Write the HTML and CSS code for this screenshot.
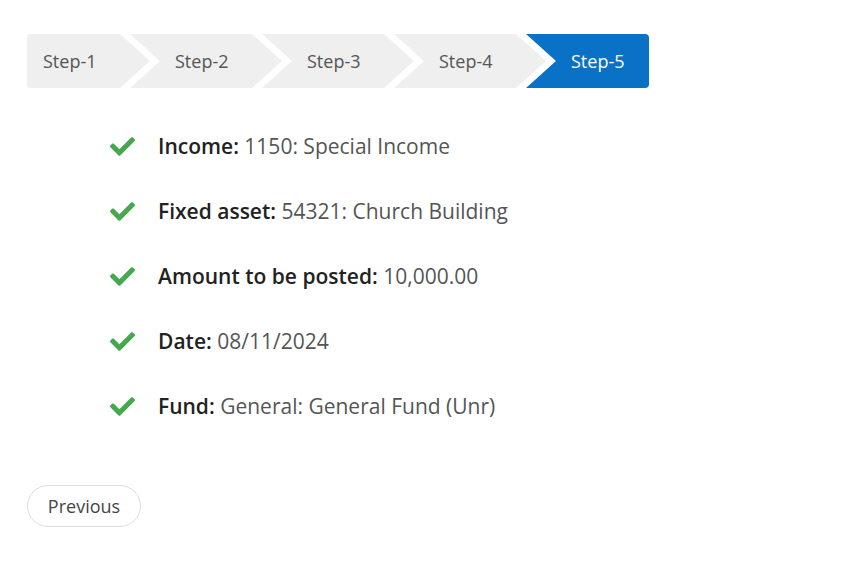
FILE: index.html
```html
<!DOCTYPE html>
<html>
<head>
<meta charset="utf-8">
<link rel="stylesheet" href="styles.css">
</head>
<body>
<div class="page">
  <div class="steps">
    <div class="step step-first">Step-1</div>
    <div class="step">Step-2</div>
    <div class="step">Step-3</div>
    <div class="step">Step-4</div>
    <div class="step step-last step-active">Step-5</div>
  </div>

  <ul class="summary">
    <li class="row">
      <svg class="check" viewBox="0 64 512 384"><path d="M173.898 439.404l-166.4-166.4c-9.997-9.997-9.997-26.206 0-36.204l36.203-36.204c9.997-9.998 26.207-9.998 36.204 0L192 312.69 432.095 72.596c9.997-9.997 26.207-9.997 36.204 0l36.203 36.204c9.997 9.997 9.997 26.206 0 36.204l-294.4 294.401c-9.998 9.997-26.207 9.997-36.204-.001z"/></svg>
      <span class="text"><span class="label">Income:</span> <span class="value">1150: Special Income</span></span>
    </li>
    <li class="row">
      <svg class="check" viewBox="0 64 512 384"><path d="M173.898 439.404l-166.4-166.4c-9.997-9.997-9.997-26.206 0-36.204l36.203-36.204c9.997-9.998 26.207-9.998 36.204 0L192 312.69 432.095 72.596c9.997-9.997 26.207-9.997 36.204 0l36.203 36.204c9.997 9.997 9.997 26.206 0 36.204l-294.4 294.401c-9.998 9.997-26.207 9.997-36.204-.001z"/></svg>
      <span class="text"><span class="label">Fixed asset:</span> <span class="value">54321: Church Building</span></span>
    </li>
    <li class="row">
      <svg class="check" viewBox="0 64 512 384"><path d="M173.898 439.404l-166.4-166.4c-9.997-9.997-9.997-26.206 0-36.204l36.203-36.204c9.997-9.998 26.207-9.998 36.204 0L192 312.69 432.095 72.596c9.997-9.997 26.207-9.997 36.204 0l36.203 36.204c9.997 9.997 9.997 26.206 0 36.204l-294.4 294.401c-9.998 9.997-26.207 9.997-36.204-.001z"/></svg>
      <span class="text"><span class="label">Amount to be posted:</span> <span class="value">10,000.00</span></span>
    </li>
    <li class="row">
      <svg class="check" viewBox="0 64 512 384"><path d="M173.898 439.404l-166.4-166.4c-9.997-9.997-9.997-26.206 0-36.204l36.203-36.204c9.997-9.998 26.207-9.998 36.204 0L192 312.69 432.095 72.596c9.997-9.997 26.207-9.997 36.204 0l36.203 36.204c9.997 9.997 9.997 26.206 0 36.204l-294.4 294.401c-9.998 9.997-26.207 9.997-36.204-.001z"/></svg>
      <span class="text"><span class="label">Date:</span> <span class="value">08/11/2024</span></span>
    </li>
    <li class="row">
      <svg class="check" viewBox="0 64 512 384"><path d="M173.898 439.404l-166.4-166.4c-9.997-9.997-9.997-26.206 0-36.204l36.203-36.204c9.997-9.998 26.207-9.998 36.204 0L192 312.69 432.095 72.596c9.997-9.997 26.207-9.997 36.204 0l36.203 36.204c9.997 9.997 9.997 26.206 0 36.204l-294.4 294.401c-9.998 9.997-26.207 9.997-36.204-.001z"/></svg>
      <span class="text"><span class="label">Fund:</span> <span class="value">General: General Fund (Unr)</span></span>
    </li>
  </ul>

  <button class="btn-prev">Previous</button>
</div>
</body>
</html>
```

FILE: styles.css
```css
html, body {
  margin: 0;
  padding: 0;
  background: #ffffff;
}

body {
  font-family: "Open Sans", "Liberation Sans", sans-serif;
}

.page {
  padding: 34px 27px;
}

.steps {
  display: flex;
  height: 54px;
}

.step {
  box-sizing: border-box;
  width: 152px;
  height: 54px;
  margin-left: -20px;
  padding-left: 45px;
  display: flex;
  align-items: center;
  background: #efefef;
  color: #555555;
  font-size: 18px;
  clip-path: polygon(0 0, calc(100% - 30px) 0, 100% 50%, calc(100% - 30px) 100%, 0 100%, 30px 50%);
}

.step-first {
  width: 123px;
  margin-left: 0;
  padding-left: 16px;
  border-radius: 3px 0 0 3px;
  clip-path: polygon(0 0, calc(100% - 30px) 0, 100% 50%, calc(100% - 30px) 100%, 0 100%);
}

.step-last {
  width: 123px;
  border-radius: 0 4px 4px 0;
  clip-path: polygon(0 0, 100% 0, 100% 100%, 0 100%, 30px 50%);
}

.step-active {
  background: #0a72c6;
  color: #ffffff;
}

.summary {
  list-style: none;
  margin: 43px 0 0 0;
  padding: 0 0 0 83px;
  display: flex;
  flex-direction: column;
  gap: 35px;
}

.row {
  display: flex;
  align-items: center;
  height: 30px;
  font-size: 21px;
}

.text {
  white-space: nowrap;
}

.check {
  width: 25px;
  height: 19px;
  margin-right: 23px;
  fill: #45a84d;
  flex: none;
}

.label {
  font-weight: 600;
  color: #222222;
}

.value {
  color: #555555;
}

.btn-prev {
  display: block;
  margin-top: 64px;
  box-sizing: border-box;
  width: 114px;
  height: 42px;
  border: 1px solid #dddddd;
  border-radius: 21px;
  background: #ffffff;
  color: #444444;
  font-family: "Open Sans", "Liberation Sans", sans-serif;
  font-size: 18px;
  padding: 0;
}
```
